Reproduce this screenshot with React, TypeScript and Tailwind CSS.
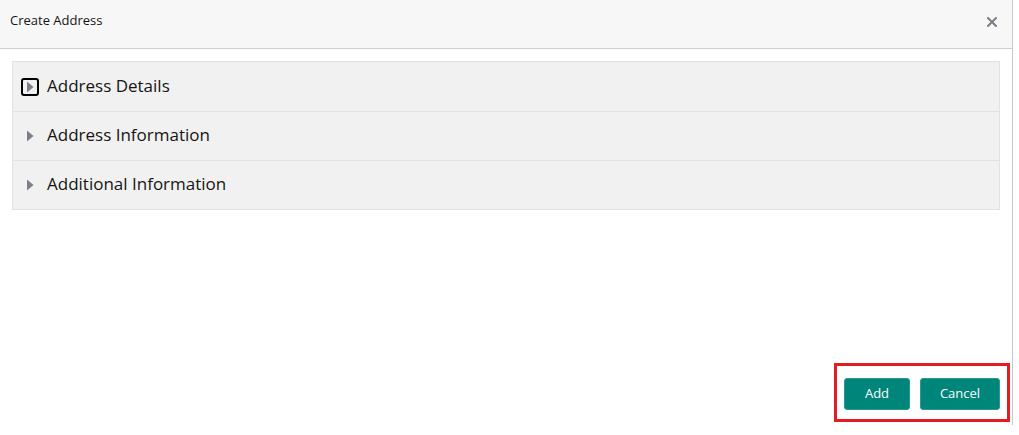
import React from "react";

const sections = ["Address Details", "Address Information", "Additional Information"];

const Caret: React.FC<{ focused?: boolean }> = ({ focused }) => (
  <span
    className={`flex h-[18px] w-[18px] items-center justify-center ${
      focused ? "rounded-[3px] border-2 border-black" : ""
    }`}
  >
    <svg width="8" height="12" viewBox="0 0 8 12">
      <path d="M1 0.5 L7.5 6 L1 11.5 Z" fill="#7b7f86" />
    </svg>
  </span>
);

export default function App() {
  return (
    <div
      className="relative flex h-[435px] w-[1019px] flex-col bg-white"
      style={{ fontFamily: '"Open Sans", "Noto Sans", sans-serif' }}
    >
      <div className="flex h-[425px] w-[1013px] flex-col border-r border-[#c8c8c8] bg-white">
        <div className="flex h-[49px] items-center justify-between border-b border-[#cfcfcf] bg-[#f7f7f7] pl-[10px] pr-[15px]">
          <span className="-mt-[7px] text-[13px] text-[#161513]">Create Address</span>
          <svg width="10" height="10" viewBox="0 0 10 10" className="-mt-[4px]">
            <path d="M1 1 L9 9 M9 1 L1 9" stroke="#7a7f86" strokeWidth="2" strokeLinecap="square" />
          </svg>
        </div>

        <div className="mx-[12px] mt-[12px] border border-[#e2e2e2] bg-[#f1f1f1]">
          {sections.map((s, i) => (
            <div
              key={s}
              className={`flex h-[49px] items-center gap-[8px] pl-[8px] ${
                i > 0 ? "border-t border-[#e2e2e2]" : ""
              }`}
            >
              <Caret focused={i === 0} />
              <span className="-mt-[2px] text-[17px] text-[#161513]">{s}</span>
            </div>
          ))}
        </div>

        <div className="flex-1" />

        <div className="mb-[3px] flex justify-end pr-[2px]">
          <div className="flex gap-[10px] border-[3px] border-[#e41b23] px-[7px] pb-[9px] pt-[12px]">
            <button className="h-[32px] w-[66px] rounded-[3px] border border-[#2a9a90] bg-[#00857a] text-[13px] text-white">
              Add
            </button>
            <button className="h-[32px] w-[80px] rounded-[3px] border border-[#2a9a90] bg-[#00857a] text-[13px] text-white">
              Cancel
            </button>
          </div>
        </div>
      </div>
    </div>
  );
}
